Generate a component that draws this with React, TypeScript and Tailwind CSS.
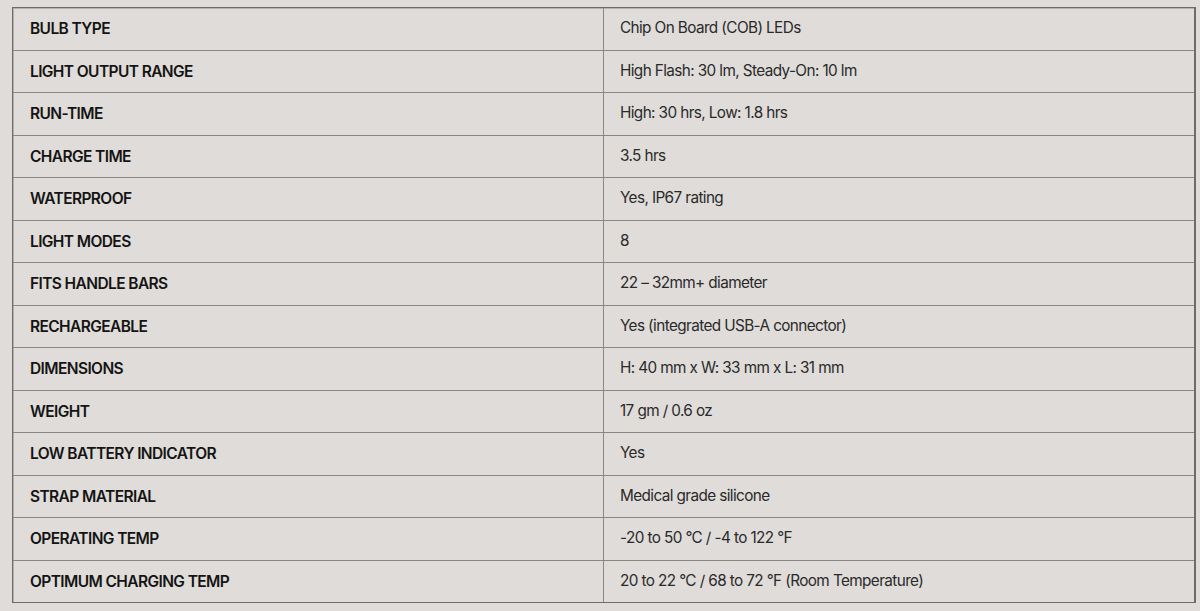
const specs: [string, string][] = [
  ['BULB TYPE', 'Chip On Board (COB) LEDs'],
  ['LIGHT OUTPUT RANGE', 'High Flash: 30 lm, Steady-On: 10 lm'],
  ['RUN-TIME', 'High: 30 hrs, Low: 1.8 hrs'],
  ['CHARGE TIME', '3.5 hrs'],
  ['WATERPROOF', 'Yes, IP67 rating'],
  ['LIGHT MODES', '8'],
  ['FITS HANDLE BARS', '22 – 32mm+ diameter'],
  ['RECHARGEABLE', 'Yes (integrated USB-A connector)'],
  ['DIMENSIONS', 'H: 40 mm x W: 33 mm x L: 31 mm'],
  ['WEIGHT', '17 gm / 0.6 oz'],
  ['LOW BATTERY INDICATOR', 'Yes'],
  ['STRAP MATERIAL', 'Medical grade silicone'],
  ['OPERATING TEMP', '-20 to 50 °C / -4 to 122 °F'],
  ['OPTIMUM CHARGING TEMP', '20 to 22 °C / 68 to 72 °F (Room Temperature)'],
];

export default function App() {
  return (
    <div
      className="w-[1200px] h-[611px] bg-[#dfdcd9] pt-[7px] pl-[12px]"
      style={{ fontFamily: 'Inter, "Liberation Sans", sans-serif' }}
    >
      <div className="w-[1184px] h-[596px] flex flex-col border border-[#6e6c6a] border-r-2 shadow-[inset_1px_1px_0_#b4b1ae]">
        {specs.map(([label, value], i) => (
          <div
            key={label}
            className={
              'flex-1 grid grid-cols-[591px_1fr] ' +
              (i > 0 ? 'border-t border-[#8a8785]' : '')
            }
          >
            <div className="flex items-center pl-[17px] border-r border-[#8a8785] text-[15.5px] font-semibold tracking-[-0.6px] text-[#141414]">
              {label}
            </div>
            <div className="flex items-center pl-[16px] text-[15.3px] tracking-[-0.6px] text-[#2a2a2a]">
              {value}
            </div>
          </div>
        ))}
      </div>
    </div>
  );
}
